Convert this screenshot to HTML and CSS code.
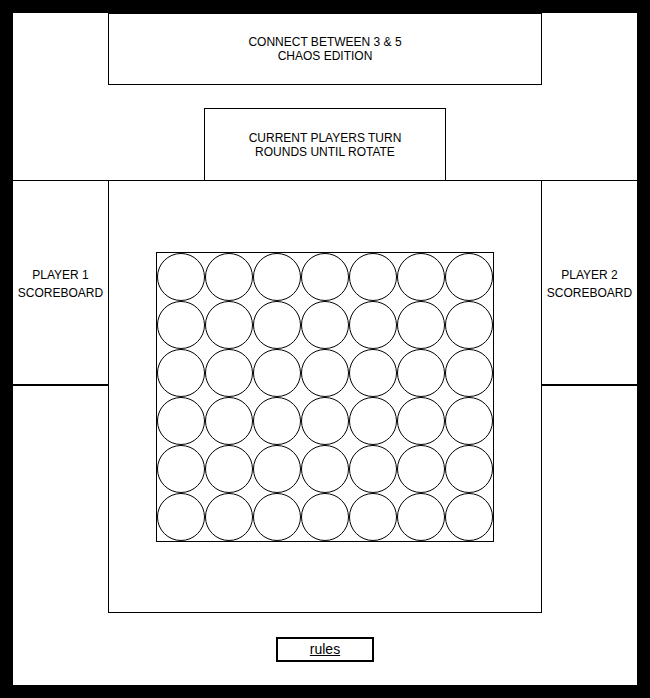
FILE: index.html
```html
<!DOCTYPE html>
<html lang="en">
<head>
  <meta charset="UTF-8">
  <title>Connect Between 3 &amp; 5 - Chaos Edition</title>
  <meta name="viewport" content="width=device-width, initial-scale=1">
  <link rel="stylesheet" href="styles.css">
</head>
<body>
<header class="title">CONNECT BETWEEN 3 &amp; 5<br>CHAOS EDITION</header>
<div class="turn">CURRENT PLAYERS TURN<br>ROUNDS UNTIL ROTATE</div>

<main class="arena">
  <aside class="score">PLAYER 1<br>SCOREBOARD</aside>
  <section class="play">
    <div class="board" id="board"></div>
  </section>
  <aside class="score">PLAYER 2<br>SCOREBOARD</aside>
</main>

<div class="foot">
  <a class="rules" href="#rules">rules</a>
</div>

<script>
(function(){
  const COLS = 7, ROWS = 6;
  const board = document.getElementById('board');
  for(let r=0;r<ROWS;r++){
    for(let c=0;c<COLS;c++){
      const cell = document.createElement('div');
      cell.className = 'cell';
      cell.dataset.row = r;
      cell.dataset.col = c;
      board.appendChild(cell);
    }
  }
})();
</script>
</body>
</html>
```

FILE: styles.css
```css
*{box-sizing:border-box;}
html{background:#000;}
body{margin:0;height:698px;border:13px solid #000;background:#fff;color:#000;font-family:"Liberation Sans",Arial,sans-serif;font-size:12px;}
.title,.turn{display:flex;align-items:center;justify-content:center;text-align:center;line-height:14px;height:72px;margin:0 auto;border:1px solid #000;}
.title{width:434px;}
.turn{width:242px;margin-top:23px;border-bottom:none;}
.arena{display:flex;align-items:flex-start;border-top:1px solid #000;}
.score{width:95px;height:205px;flex:none;display:flex;align-items:center;justify-content:center;text-align:center;line-height:18px;padding-top:2px;border-bottom:2px solid #000;}
.play{width:434px;height:432px;flex:none;display:flex;align-items:center;justify-content:center;border:1px solid #000;border-top:none;}
.board{display:grid;grid-template-columns:repeat(7,48px);grid-auto-rows:48px;border:1px solid #000;}
.cell{border:1px solid #000;border-radius:50%;}
.foot{display:flex;justify-content:center;margin-top:24px;}
.rules{display:flex;align-items:center;justify-content:center;width:98px;height:25px;padding-bottom:1px;border:2px solid #000;color:#000;font-size:14px;text-decoration:underline;}
```
